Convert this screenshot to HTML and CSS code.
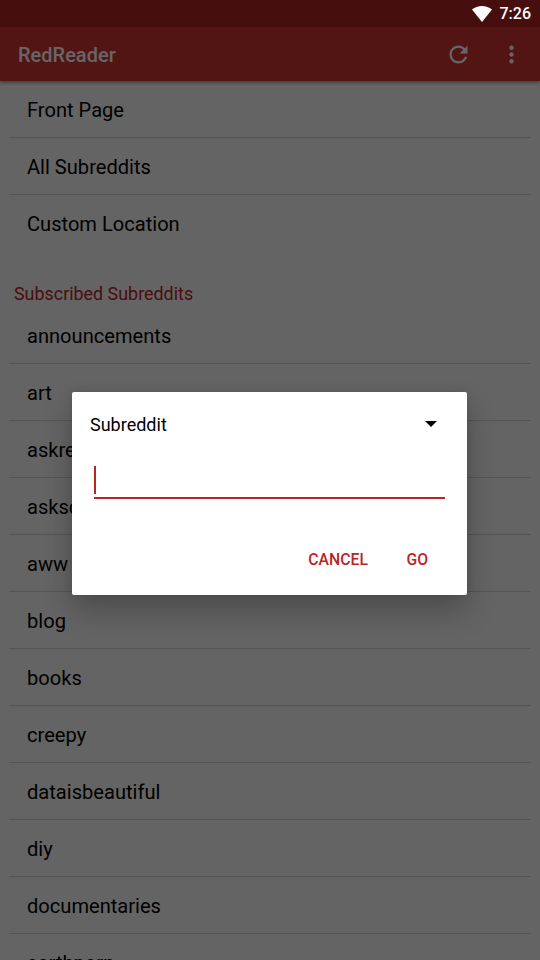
FILE: index.html
```
<!DOCTYPE html>
<html lang="en">
<head>
<meta charset="utf-8">
<title>RedReader</title>
<link rel="stylesheet" href="styles.css">
</head>
<body>
<div class="screen">
  <header class="toolbar">
    <h1 class="title">RedReader</h1>
    <svg class="icon refresh" viewBox="0 0 24 24"><path d="M17.65 6.35C16.2 4.9 14.21 4 12 4c-4.42 0-7.99 3.58-7.99 8s3.57 8 7.99 8c3.73 0 6.84-2.55 7.73-6h-2.08c-.82 2.33-3.04 4-5.65 4-3.31 0-6-2.69-6-6s2.69-6 6-6c1.66 0 3.14.69 4.22 1.78L13 11h7V4l-2.35 2.35z"/></svg>
    <svg class="icon more" viewBox="0 0 24 24"><path d="M12 8c1.1 0 2-.9 2-2s-.9-2-2-2-2 .9-2 2 .9 2 2 2zm0 2c-1.1 0-2 .9-2 2s.9 2 2 2 2-.9 2-2-.9-2-2-2zm0 6c-1.1 0-2 .9-2 2s.9 2 2 2 2-.9 2-2-.9-2-2-2z"/></svg>
  </header>
  <main>
    <ul class="list">
      <li>Front Page</li>
      <li>All Subreddits</li>
      <li class="last">Custom Location</li>
    </ul>
    <h2 class="section">Subscribed Subreddits</h2>
    <ul class="list">
      <li>announcements</li>
      <li>art</li>
      <li>askreddit</li>
      <li>askscience</li>
      <li>aww</li>
      <li>blog</li>
      <li>books</li>
      <li>creepy</li>
      <li>dataisbeautiful</li>
      <li>diy</li>
      <li>documentaries</li>
      <li>earthporn</li>
    </ul>
  </main>
</div>
<div class="overlay">
  <div class="status">
    <svg class="wifi" viewBox="0 0 20 16"><path d="M0 3.6C2.9 1.3 6.3 0 10 0s7.100 1.300 10 3.600L10 16z"/></svg>
    <span>7:26</span>
  </div>
  <div class="dialog">
    <div class="spinner"><span>Subreddit</span><i class="arrow"></i></div>
    <div class="field"><i class="caret"></i></div>
    <div class="actions"><span class="cancel">CANCEL</span><span>GO</span></div>
  </div>
</div>
</body>
</html>
```

FILE: styles.css
```
* { box-sizing: border-box; }
body {
  margin: 0;
  height: 960px;
  overflow: hidden;
  font-family: Roboto, "Liberation Sans", sans-serif;
  background: #fafafa;
}
.screen {
  height: 960px;
  overflow: hidden;
  border-top: 27px solid #b12525;
}
.toolbar {
  position: relative;
  display: flex;
  align-items: center;
  height: 54px;
  padding: 0 15px 0 18px;
  background: #d03232;
  box-shadow: 0 1px 4px rgba(0, 0, 0, .5);
}
.title {
  flex: 1;
  margin: 2px 0 0;
  font-size: 20px;
  font-weight: 500;
  color: #fff;
}
.icon { width: 27px; height: 27px; fill: #fff; }
.refresh { margin-right: 26px; }
.list {
  margin: 0 9px;
  padding: 0;
  list-style: none;
}
.list li {
  height: 57px;
  padding: 2px 18px 0;
  border-bottom: 1px solid #d2d2d2;
  line-height: 55px;
  font-size: 20.100px;
  color: #000;
}
.list .last { border-bottom-color: transparent; }
.section {
  height: 55px;
  margin: 0;
  padding: 30px 14px 0;
  line-height: 24px;
  font-size: 17.900px;
  font-weight: 400;
  color: #b92527;
}
.overlay {
  position: absolute;
  inset: 0;
  display: flex;
  flex-direction: column;
  align-items: center;
  background: rgba(0, 0, 0, .6);
}
.status {
  display: flex;
  align-items: center;
  justify-content: flex-end;
  align-self: stretch;
  gap: 8px;
  height: 27px;
  padding-right: 9px;
  font-size: 16px;
  font-weight: 500;
  color: #fff;
}
.wifi { width: 20px; height: 16px; fill: #fff; }
.dialog {
  width: 395px;
  height: 203px;
  margin: 365px 1px 0 0;
  border-radius: 2px;
  background: #fff;
  box-shadow: 0 16px 30px rgba(0, 0, 0, .24), 0 0 8px rgba(0, 0, 0, .1);
}
.spinner {
  display: flex;
  align-items: center;
  justify-content: space-between;
  height: 66px;
  padding: 0 30px 2px 18px;
  font-size: 18px;
  color: #000;
}
.arrow {
  border: 6px solid transparent;
  border-top-color: #000;
  border-bottom: 0;
}
.field {
  height: 41px;
  margin: 0 22px;
  padding-top: 8px;
  border-bottom: 2px solid #b92527;
}
.caret {
  display: block;
  width: 2px;
  height: 28px;
  background: #b92527;
}
.actions {
  display: flex;
  justify-content: flex-end;
  padding: 51px 39px 0 0;
  line-height: 20px;
  font-size: 15.750px;
  font-weight: 500;
  color: #b92527;
}
.cancel { margin-right: 38.500px; }
```
